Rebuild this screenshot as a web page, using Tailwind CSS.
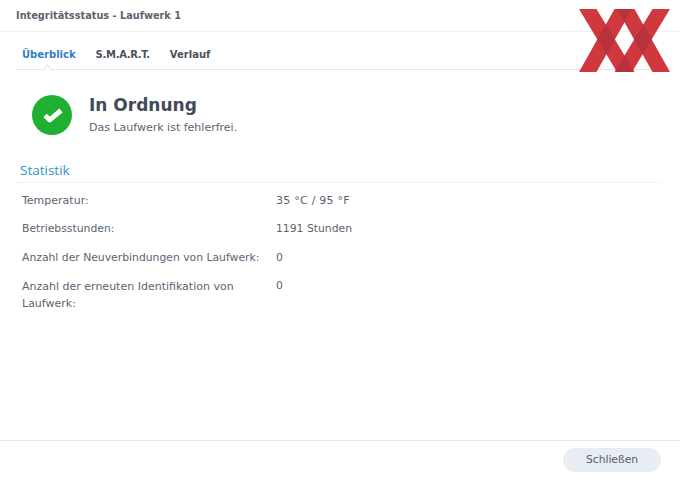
<!DOCTYPE html>
<html lang="de">
<head>
    <meta charset="UTF-8">
    <title>Integritätsstatus - Laufwerk 1</title>
    <script src="https://cdn.jsdelivr.net/npm/@tailwindcss/browser@4"></script>
</head>
<body class="bg-white">
    <div class="relative flex flex-col w-[680px] h-[479px] overflow-hidden bg-white font-['DejaVu_Sans',sans-serif] text-[11px] text-[#525c6b]">
        <!-- Title bar -->
        <div class="h-[32px] shrink-0 border-b border-[#eef0f2] pl-[16px] pt-[9px] text-[9.75px] font-bold leading-[13px] text-[#5b6470]">Integritätsstatus - Laufwerk 1</div>

        <!-- Tabs -->
        <div class="relative mx-[16px] flex h-[38px] shrink-0 items-center gap-[20px] border-b border-[#dfe4e8] pl-[6px] pt-[8px] text-[10px] font-bold">
            <span class="text-[#2f80c5]">Überblick</span>
            <span class="tracking-[-0.3px] text-[#49525e]">S.M.A.R.T.</span>
            <span class="text-[#49525e]">Verlauf</span>
            <div class="absolute left-[28px] bottom-[-4px] size-[7px] rotate-45 border-l border-t border-[#dfe4e8] bg-white"></div>
        </div>

        <!-- Status -->
        <div class="flex shrink-0 items-start gap-[17px] pl-[32px] pt-[25px]">
            <svg class="size-[40px] shrink-0" viewBox="0 0 40 40">
                <circle cx="20" cy="20" r="20" fill="#1fb032"/>
                <path d="M13 20.5 L17.8 24.8 L29 15.5" fill="none" stroke="#fff" stroke-width="5" stroke-linejoin="round"/>
            </svg>
            <div class="-mt-[1px]">
                <div class="text-[17px] font-bold leading-[22px] text-[#414b59]">In Ordnung</div>
                <div class="mt-[5px] text-[11px] leading-[14px] text-[#5b6470]">Das Laufwerk ist fehlerfrei.</div>
            </div>
        </div>

        <!-- Statistics -->
        <div class="ml-[16px] mr-[20px] mt-[26px] border-b border-dotted border-[#dfe4e8] pl-[4px] pb-[3px] font-['Open_Sans',sans-serif] text-[13.5px] leading-[18px] text-[#2f93c9]">Statistik</div>
        <div class="grid grid-cols-[254px_1fr] gap-y-[12px] pl-[22px] pt-[10px] text-[10.8px] leading-[16px] text-[#5b6470]">
            <div class="text-[11px]">Temperatur:</div><div class="text-[11px] tracking-[0.25px]">35 °C / 95 °F</div>
            <div>Betriebsstunden:</div><div>1191 Stunden</div>
            <div class="mt-[1px]">Anzahl der Neuverbindungen von Laufwerk:</div><div class="mt-[1px]">0</div>
            <div class="w-[238px] text-[11px] leading-[17px]">Anzahl der erneuten Identifikation von Laufwerk:</div><div>0</div>
        </div>

        <!-- Footer -->
        <div class="mt-auto flex h-[39px] shrink-0 items-start justify-end border-t border-[#e8eaed] pr-[19px] pt-[7px]">
            <button class="h-[24px] w-[98px] rounded-full bg-[#e8edf3] text-[10.7px] text-[#525c6b]">Schließen</button>
        </div>

        <!-- Watermark logo -->
        <svg class="absolute left-[579px] top-[9px] h-[63px] w-[91px]" viewBox="0 0 91 63">
            <defs>
                <clipPath id="band1"><polygon points="0,0 17.5,0 55.5,63 38,63"/></clipPath>
                <clipPath id="band3"><polygon points="38,0 55.5,0 91,63 73.5,63"/></clipPath>
            </defs>
            <g fill="#cf383e">
                <polygon points="0,0 17.5,0 55.5,63 38,63"/>
                <polygon points="35.5,0 53,0 17.5,63 0,63"/>
                <polygon points="38,0 55.5,0 91,63 73.5,63"/>
                <polygon points="73.5,0 91,0 53,63 35.5,63"/>
            </g>
            <g fill="#b8323b">
                <polygon clip-path="url(#band1)" points="35.5,0 53,0 17.5,63 0,63"/>
                <polygon clip-path="url(#band1)" points="73.5,0 91,0 53,63 35.5,63"/>
                <polygon clip-path="url(#band3)" points="35.5,0 53,0 17.5,63 0,63"/>
                <polygon clip-path="url(#band3)" points="73.5,0 91,0 53,63 35.5,63"/>
            </g>
        </svg>
    </div>
</body>
</html>
